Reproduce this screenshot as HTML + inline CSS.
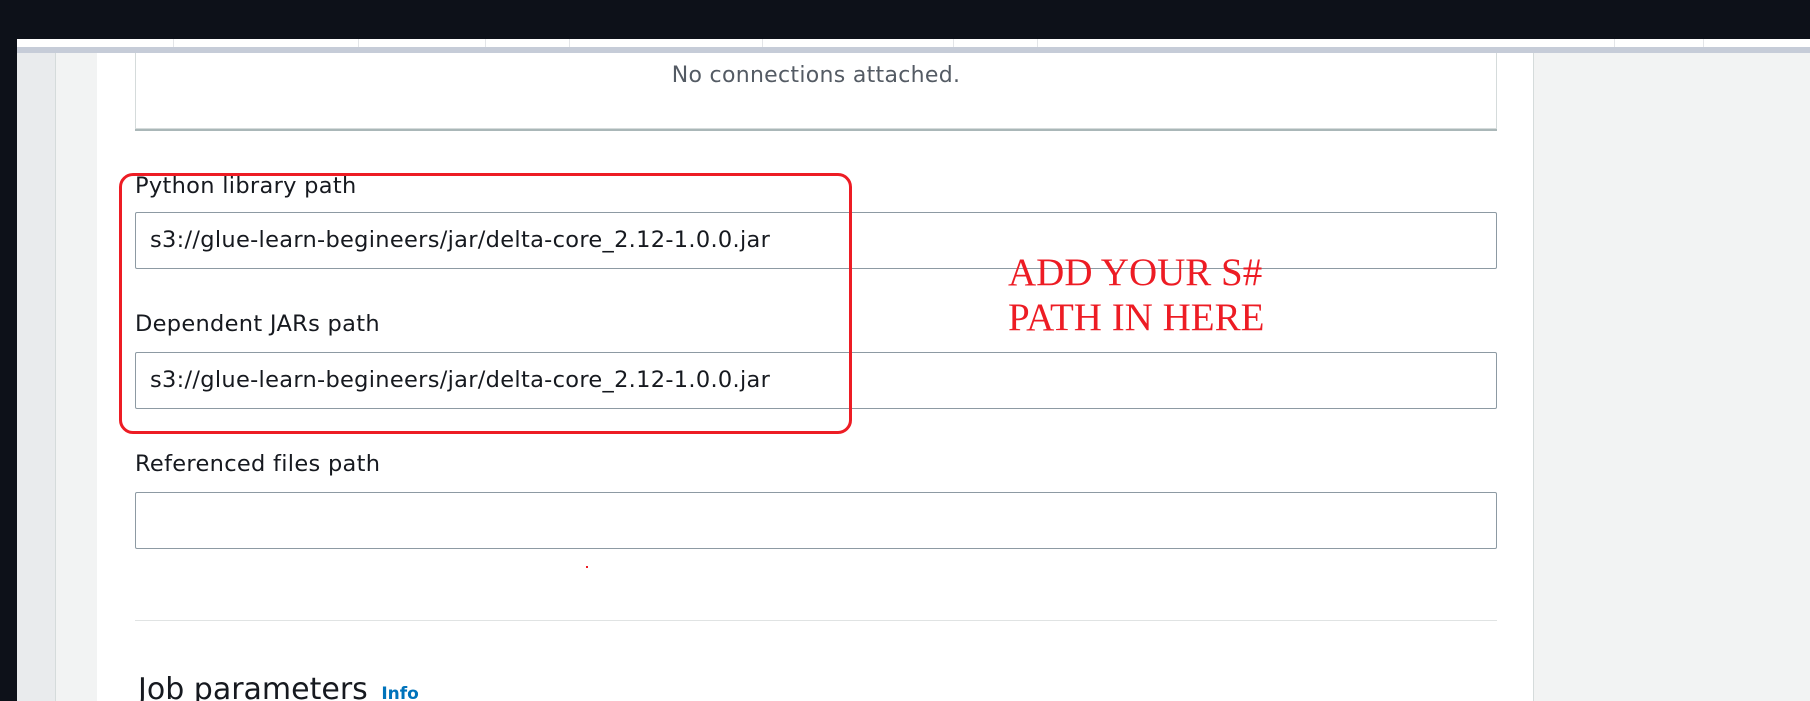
<!DOCTYPE html>
<html><head><meta charset="utf-8"><style>
*{margin:0;padding:0;box-sizing:border-box}
html,body{width:1810px;height:701px;overflow:hidden}
body{background:#0d1119;position:relative;font-family:"DejaVu Sans","Liberation Sans",sans-serif}
.a{position:absolute}
.lbl{position:absolute;left:135px;font-size:22.5px;color:#16191f;letter-spacing:0.3px}
.inp{position:absolute;left:135px;width:1362px;height:57px;border:1px solid #8d9aa3;border-radius:2px;background:#fff;font-size:22.5px;color:#16191f;padding-left:14px;line-height:55px;letter-spacing:0.3px}
.red{position:absolute;left:1008px;font-family:"Liberation Serif",serif;font-size:39px;color:#ed1c24;line-height:45px}
</style></head><body>
<div class="a" style="left:17px;top:39px;width:1793px;height:662px;background:#fff"></div>
<div class="a" style="left:17px;top:47px;width:1793px;height:6px;background:#c6ccd8"></div>
<div class="a" style="left:173px;top:39px;width:1px;height:8px;background:#e3e5e8"></div>
<div class="a" style="left:358px;top:39px;width:1px;height:8px;background:#e3e5e8"></div>
<div class="a" style="left:485px;top:39px;width:1px;height:8px;background:#e3e5e8"></div>
<div class="a" style="left:569px;top:39px;width:1px;height:8px;background:#e3e5e8"></div>
<div class="a" style="left:762px;top:39px;width:1px;height:8px;background:#e3e5e8"></div>
<div class="a" style="left:953px;top:39px;width:1px;height:8px;background:#e3e5e8"></div>
<div class="a" style="left:1037px;top:39px;width:1px;height:8px;background:#e3e5e8"></div>
<div class="a" style="left:1614px;top:39px;width:1px;height:8px;background:#e3e5e8"></div>
<div class="a" style="left:1703px;top:39px;width:1px;height:8px;background:#e3e5e8"></div>
<div class="a" style="left:17px;top:53px;width:38px;height:648px;background:#e9ebed"></div>
<div class="a" style="left:55px;top:53px;width:1px;height:648px;background:#d5dbdb"></div>
<div class="a" style="left:56px;top:53px;width:41px;height:648px;background:#f2f3f3"></div>
<div class="a" style="left:1533px;top:53px;width:1px;height:648px;background:#d5dbdb"></div>
<div class="a" style="left:1534px;top:53px;width:276px;height:648px;background:#f2f3f3"></div>
<div class="a" style="left:135px;top:53px;width:1362px;height:76px;border:1px solid #d5dbdb;border-top:none;box-shadow:0 2px 0 #aab7b8;background:#fff"></div>
<div class="a" style="left:135px;top:63px;width:1362px;text-align:center;font-size:22px;color:#545b64;letter-spacing:0.3px">No connections attached.</div>
<div class="lbl" style="top:173px">Python library path</div>
<div class="inp" style="top:212px">s3://glue-learn-begineers/jar/delta-core_2.12-1.0.0.jar</div>
<div class="lbl" style="top:311px">Dependent JARs path</div>
<div class="inp" style="top:352px">s3://glue-learn-begineers/jar/delta-core_2.12-1.0.0.jar</div>
<div class="lbl" style="top:451px">Referenced files path</div>
<div class="inp" style="top:492px"></div>
<div class="a" style="left:586px;top:566px;width:2px;height:2px;background:#ed1c24"></div>
<div class="a" style="left:135px;top:620px;width:1362px;height:1px;background:#e0e3e3"></div>
<div class="a" style="left:138px;top:672px;font-size:30px;color:#16191f;white-space:nowrap">Job parameters <span style="font-size:17px;font-weight:bold;color:#0073bb;margin-left:4px">Info</span></div>
<div class="a" style="left:119px;top:173px;width:733px;height:261px;border:3.5px solid #ed1c24;border-radius:14px"></div>
<div class="red" style="top:250px">ADD YOUR S#</div>
<div class="red" style="top:295px">PATH IN HERE</div>
</body></html>
